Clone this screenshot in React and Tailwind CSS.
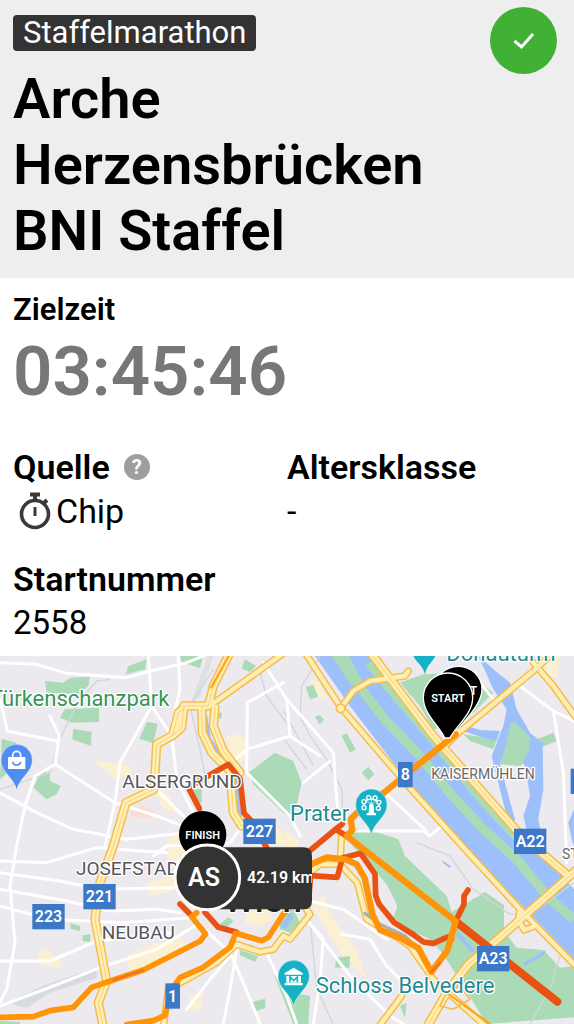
import React from "react";

const GREEN = "#abdbb6";
const WATER = "#9dc0fb";

const wideHighways = [
  "M690 -10L640 90L625 150L560 150L535 170L518 238L470 265L462 400L378 440L340 570L300 680L285 790L320 975L295 1040L310 1114",
  "M518 238L545 215L552 150",
  "M605 155L607 230L635 290L690 345L700 470L725 510",
  "M645 155L640 210L670 285L720 350",
  "M1112 -10L1300 240L1560 535L1700 655",
  "M1732 640L1510 835L1405 925L1340 1010L1280 1114",
];

const highways = [
  "M860 -15L650 135L625 150",
  "M915 -10L1023 155L1220 385L1400 585L1560 760L1732 935",
  "M1023 155L1060 105L1110 75L1215 60L1225 45",
  "M1732 -75L1600 45L1370 235L1340 265",
  "M1600 20L1660 90L1732 190",
  "M1025 535L1020 625L1072 680L1100 790L1170 830L1230 870L1300 970L1460 1114",
  "M1020 625L960 625L930 650L905 740L930 775L870 850L850 840L820 880L780 888L710 865L650 920L560 970L505 1000L490 1114",
  "M1205 1020L1135 1114",
  "M1560 760L1555 790L1572 822L1600 812",
];

const streets = [
  "M0 20L110 25L200 52L380 65L450 45L560 20L610 0",
  "M445 0L455 150L515 240L530 370L580 470",
  "M535 0L540 100L515 210",
  "M455 150L360 320L345 440L315 570",
  "M150 180L178 240L165 325L105 360L75 450L50 570L30 690L45 860L20 1000L0 1040",
  "M0 130L22 225L170 255",
  "M165 325L345 440L470 480L600 530",
  "M0 410L110 470L220 520L380 550L560 530",
  "M0 615L140 620L290 575L500 590",
  "M0 650L180 675L300 700L520 695",
  "M0 700L200 735L330 765L470 760L540 770",
  "M0 750L150 790L370 800L570 785",
  "M0 915L150 915L290 855L520 830",
  "M690 325L740 280L870 240L960 300",
  "M742 140L740 350L870 480L900 540",
  "M790 20L860 130L870 240",
  "M742 140L850 80",
  "M0 1050L160 990L300 935L470 880L600 800",
  "M852 120L1000 290L1010 430L1020 520",
  "M910 380L990 315",
  "M1050 525L1270 525L1290 540L1325 510",
  "M1155 410L1280 525",
  "M1560 90L1660 165L1722 195",
  "M1660 165L1690 350L1700 620",
  "M1440 80L1480 130",
  "M930 735L1030 760L1160 850",
  "M920 790L970 850L960 980L940 1104",
  "M920 790L1050 960L1170 1080L1210 1104",
  "M1025 835L1110 850L1160 930L1240 1010",
  "M620 825L690 890L730 980L780 1104",
  "M710 880L690 1000L670 1104",
  "M800 890L860 1020L890 1104",
  "M690 900L630 970L560 1060",
  "M460 600L500 570L690 560L740 490",
  "M470 400L560 490",
  "M1350 990L1430 1100",
];

const rails = [
  "M330 70L290 75L230 145L180 250L150 350L0 400",
  "M640 40L570 150L600 280L620 380",
  "M780 50L800 120L870 215",
  "M960 0L905 90L900 180L930 240L980 310L1025 400L1030 500",
  "M852 165L940 330M852 250L920 340",
  "M1250 560L1350 600L1420 700L1530 775L1600 770L1722 680",
  "M1680 900L1650 1000L1590 1104",
  "M930 790L950 1000L1000 1104",
];

const parks = [
  "M135 75L190 80L210 65L270 62L265 90L235 115L140 110Z",
  "M195 160L297 155L297 198L215 200L180 185Z",
  "M220 218L275 228L273 270L217 250Z",
  "M440 198L473 203L460 262L418 248Z",
  "M378 55L385 30L440 10L435 40Z",
  "M540 0L610 0L600 37L545 18Z",
  "M735 10L768 30L750 48L725 38Z",
  "M5 248L48 260L45 330L0 370Z",
  "M125 345L150 352L150 375L182 390L170 415L140 430L100 395Z",
  "M640 165L668 172L662 188L640 185Z",
  "M745 350L825 290L880 315L905 380L880 490L850 470L760 385Z",
  "M570 400L605 400L605 440L590 440Z",
  "M917 92L940 87L955 122L930 130Z",
  "M945 183L960 177L972 192L958 205Z",
  "M1025 240L1040 232L1067 280L1050 290Z",
  "M1085 350L1105 332L1123 355L1105 373Z",
  "M1200 80L1270 55L1400 50L1480 110L1440 150L1390 200L1300 220L1260 150Z",
  "M1390 235L1490 250L1480 280L1410 255Z",
  "M1610 250L1660 230L1670 255L1620 275Z",
  "M210 802L240 810L240 825L212 818Z",
  "M248 838L272 835L270 858L248 855Z",
  "M665 800L685 783L700 795L680 815L655 808Z",
  "M720 883L775 900L765 918L720 898Z",
  "M757 1038L795 1028L797 1055L760 1068Z",
  "M835 790L880 760L900 800L870 830L840 820Z",
  "M822 955L880 1010L930 1020L925 1104L880 1104Z",
  "M1008 905L1050 900L1048 935L1005 935Z",
  "M1200 1050L1220 1040L1215 1085Z",
  "M1415 730L1430 725L1436 740L1425 752L1415 745Z",
  "M0 1095L60 1098L60 1104L0 1104Z",
  "M1050 515L1130 528L1195 550L1215 600L1340 720L1355 768L1400 742L1455 708L1512 748L1512 825L1550 875L1630 882L1680 935L1722 930L1722 1084L1460 1104L1390 990L1330 895L1290 850L1230 822L1180 785L1192 750L1160 685L1080 595L1030 540Z",
];

const blocks = [
  "M680 240L715 235L745 260L742 300L720 320L690 290Z",
  "M278 312L330 320L390 330L395 350L345 370L320 345Z",
  "M460 400L500 405L530 470L490 460Z",
  "M115 890L145 875L150 895L185 910L175 940L150 930L120 930Z",
  "M380 900L440 870L540 845L560 870L480 930L390 950Z",
  "M740 760L790 750L820 790L780 810L735 800Z",
  "M930 740L970 720L1000 790L1070 880L1100 970L1020 890Z",
  "M570 1020L610 1010L600 1060L560 1060Z",
  "M1610 0L1680 0L1670 70L1620 40Z",
  "M500 550L560 530L560 620L510 640Z",
  "M440 680L520 660L530 700L450 720Z",
  "M930 70L960 80L980 130L950 120Z",
  "M750 480L830 500L860 570L780 560Z",
  "M852 520L900 560L852 600Z",
];

function Shield({ x, y, w = 97, h = 76, label }) {
  return (
    <g>
      <rect x={x} y={y} width={w} height={h} fill="#3b78c8" />
      <text x={x + w / 2} y={y + h / 2 + 17} fontSize="48" fontWeight="600" fill="#fff" textAnchor="middle">
        {label}
      </text>
    </g>
  );
}

function Label({ x, y, size = 66, color = "#55555b", anchor = "start", children }) {
  return (
    <text x={x} y={y} fontSize={size} fill={color} textAnchor={anchor} stroke="#fff" strokeWidth="8" strokeLinejoin="round" paintOrder="stroke">
      {children}
    </text>
  );
}

function PlacePin({ x, y, color, children }) {
  return (
    <g transform={`translate(${x} ${y})`}>
      <path d="M0 90C-8 52 -47 38 -47 0A47 47 0 0 1 47 0C47 38 8 52 0 90Z" fill={color} stroke="#fff" strokeOpacity=".6" strokeWidth="2" />
      {children}
    </g>
  );
}

function RaceMap() {
  return (
    <svg viewBox="0 0 1722 1104" className="block h-auto w-full bg-[#ece9ef] font-[Roboto,sans-serif]" role="img" aria-label="Wien">
      <g>
        {blocks.map((d) => <path key={d} d={d} fill="#fcf0d2" />)}
        <path d="M390 470L420 445L465 465L455 488L395 482Z" fill="#fbdcd6" />
        <path d="M20 1040L140 985L290 935L290 965L150 1010L80 1055Z" fill="#d5dbdf" />
        <path d="M640 0L600 120L570 150L590 90L625 0Z" fill="#dbe0e4" />
        {parks.map((d) => <path key={d} d={d} fill={GREEN} />)}
      </g>

      <g fill={WATER}>
        <path d="M945 0L1050 150L1222 375L1400 580L1552 735L1722 910L1722 700L1640 610L1540 520L1290 235L1105 0Z" />
        <path d="M1435 0L1480 40L1530 80L1550 160L1590 230L1628 260L1630 400L1615 490L1640 610L1590 560L1570 480L1590 420L1575 330L1550 300L1500 325L1520 400L1545 490L1530 520L1500 400L1475 300L1510 210L1520 160L1480 100Z" />
        <path d="M1385 205L1440 222L1500 225L1490 255L1450 245L1390 225Z" />
        <path d="M1722 460L1705 500L1715 550L1722 570Z" />
        <path d="M1325 612L1352 630L1350 637L1330 622Z" />
        <path d="M1370 820L1425 885L1415 890L1370 840Z" />
        <path d="M1570 920L1640 882L1630 898L1575 930Z" />
        <path d="M840 810L870 770L880 785L855 820Z" />
      </g>
      <g fill="none" stroke={GREEN} strokeLinejoin="round">
        <path d="M1025 -10L1085 100L1150 185L1260 300L1340 400L1450 520L1550 610L1650 730L1722 790" strokeWidth="28" />
        <path d="M1110 20L1200 130L1290 235L1440 420L1570 560" strokeWidth="34" />
        <path d="M1010 -10L1070 80" strokeWidth="36" />
      </g>
      <path d="M1545 197L1590 245L1588 280L1562 330L1500 325L1520 260L1532 200Z" fill={GREEN} />
      <path d="M613 180L625 250L660 300L705 375L717 490" fill="none" stroke={WATER} strokeWidth="17" />

      <g fill="none" stroke="#cfd7dc" strokeWidth="4">
        {rails.map((d) => <path key={d} d={d} />)}
      </g>
      <g fill="none" stroke="#fff" strokeWidth="9" strokeLinejoin="round" strokeLinecap="round">
        {streets.map((d) => <path key={d} d={d} />)}
      </g>
      <g fill="none" strokeLinejoin="round" strokeLinecap="round">
        <g stroke="#f6bd4c">
          {highways.map((d) => <path key={d} d={d} strokeWidth="22" />)}
          {wideHighways.map((d) => <path key={d} d={d} strokeWidth="28" />)}
        </g>
        <g stroke="#fdeeb4">
          {highways.map((d) => <path key={d} d={d} strokeWidth="13" />)}
          {wideHighways.map((d) => <path key={d} d={d} strokeWidth="19" />)}
        </g>
        <g stroke="#f8d279" strokeWidth="3">
          {wideHighways.map((d) => <path key={d} d={d} />)}
        </g>
        <path d="M686 0L634 94M1340 1010L1470 1104" stroke="#ffa51f" strokeWidth="7" />
        <circle cx="1022" cy="157" r="13" stroke="#f6bd4c" strokeWidth="5" fill="#fdeeb4" />
        <path d="M1340 1010L1380 990L1410 1030L1360 1060L1320 1050Z" stroke="#f6bd4c" strokeWidth="5" />
        <path d="M1095 772L1140 805L1215 840L1260 885" stroke="#a8afb2" strokeWidth="10" />
      </g>

      <g fill="none" strokeLinejoin="round" strokeLinecap="round" strokeWidth="17">
        <path d="M1367 796L1672 1037" stroke="#e95212" strokeWidth="24" />
        <path d="M598 458L568 400L582 384L685 325L720 368L732 472L752 492L800 575" stroke="#e95212" />
        <path d="M1027 504L1007 520L932 582L880 630M1007 520L1040 540" stroke="#e95212" />
        <path d="M932 659L1012 664L1027 606L1082 592L1125 654L1127 719L1137 744L1182 799L1242 837L1270 858L1300 862L1342 843L1355 848" stroke="#e95212" />
        <path d="M1367 796L1372 785L1392 745L1392 720L1404 702" stroke="#e95212" />
        <path d="M932 659L925 740M540 744L575 779M615 769L655 814L710 829" stroke="#e95212" />
        <path d="M1367 235L1152 410L1077 465L1052 490L1057 522L1040 540L1367 796L1342 884L1294 948L1255 876L1205 848L1140 822L1117 774L1094 666L1070 625L1037 610L980 604L932 625" stroke="#ff9409" strokeWidth="19" />
        <path d="M0 1084L100 1082L150 1064L220 1054L275 994L340 972L430 942L600 856L617 834L575 782L590 770" stroke="#ff9409" />
        <path d="M380 1106L460 1094L495 1078L515 1000L540 965L610 934L690 874L707 832L785 854L805 844L850 774L900 720" stroke="#ff9409" />
        <path d="M340 972L430 942M1294 948L1320 920" stroke="#ed7020" strokeWidth="6" />
      </g>

      <Label x={508} y={150} color="#3b9457" anchor="end">Türkenschanzpark</Label>
      <Label x={367} y={395} size={57}>ALSERGRUND</Label>
      <Label x={228} y={658} size={57}>JOSEFSTADT</Label>
      <Label x={305} y={849} size={57}>NEUBAU</Label>
      <Label x={1294} y={370} size={42} color="#68696f">KAISERMÜHLEN</Label>
      <Label x={1686} y={609} size={42} color="#68696f">STADLAU</Label>
      <Label x={870} y={496} color="#1f8b93">Prater</Label>
      <Label x={947} y={1011} color="#1f8b93">Schloss Belvedere</Label>
      <Label x={1339} y={15} color="#1f8b93">Donauturm</Label>
      <text x="672" y="768" fontSize="105" fontWeight="500" fill="#202020" stroke="#fff" strokeWidth="6" paintOrder="stroke">Wien</text>

      <Shield x={730} y={488} label="227" />
      <Shield x={250} y={684} label="221" />
      <Shield x={97} y={744} label="223" />
      <Shield x={496} y={982} w={44} label="1" />
      <Shield x={1194} y={318} w={44} label="8" />
      <Shield x={1542} y={518} label="A22" />
      <Shield x={1431} y={870} label="A23" />
      <rect x="1712" y="338" width="10" height="76" fill="#3b78c8" />

      <PlacePin x={50} y={312} color="#4f8df5">
        <path d="M-26 -9H26V27H-26Z" fill="#fff" />
        <path d="M-12 -9V-14A12 12 0 0 1 12 -14V-9" fill="none" stroke="#fff" strokeWidth="5" />
        <path d="M-12 5A12 10 0 0 0 12 5" fill="none" stroke="#4f8df5" strokeWidth="5" />
      </PlacePin>
      <PlacePin x={1114} y={446} color="#16b1c4">
        <g fill="none" stroke="#fff" strokeWidth="4">
          <path d="M-16 17A23 20 0 1 1 16 17" />
          <path d="M0 -2L-18 -12M0 -2L18 -12M0 -2V-18" strokeWidth="2" />
          <g fill="#16b1c4">
            <circle cx="-8" cy="-21" r="6" />
            <circle cx="11" cy="-20" r="6" />
            <circle cx="23" cy="-7" r="6" />
            <circle cx="21" cy="11" r="6" />
            <circle cx="-22" cy="-9" r="6" />
            <circle cx="-22" cy="9" r="6" />
          </g>
        </g>
        <path d="M-7 4A7 7 0 0 1 7 4L8 25H14V32H-14V25H-8Z" fill="#fff" />
      </PlacePin>
      <PlacePin x={881} y={960} color="#16b1c4">
        <path d="M0 -25L27 -9V-4H-27V-9ZM-22 0H22V20H-22ZM-27 21H27V28H-27Z" fill="#fff" />
        <path d="M-11 19V3L0 14L11 3V19" fill="none" stroke="#16b1c4" strokeWidth="5" />
      </PlacePin>
      <path d="M1240 0H1306C1298 18 1281 26 1275 55C1267 26 1248 18 1240 0Z" fill="#16b1c4" />

      <g stroke="#fff" strokeWidth="4" strokeLinejoin="round">
        <path d="M1372 222C1350 190 1304 150 1304 100A71 69 0 0 1 1446 100C1446 144 1396 190 1372 222Z" />
        <text x="1420" y="117" fontSize="36" fontWeight="600" fill="#fff" stroke="none" textAnchor="middle">T</text>
        <path d="M1334 246C1322 214 1270 176 1270 125A74 74 0 0 1 1418 125C1418 176 1364 214 1350 246Z" />
      </g>
      <text x="1344" y="138" fontSize="33" fontWeight="600" fill="#fff" textAnchor="middle">START</text>

      <circle cx="608" cy="536" r="71" />
      <text x="608" y="549" fontSize="33" fontWeight="600" fill="#fff" textAnchor="middle">FINISH</text>
      <path d="M620 574H910Q936 574 936 600V734Q936 760 910 760H620Z" fill="#333" />
      <clipPath id="distance-box"><path d="M620 574H936V760H620Z" /></clipPath>
      <text x="741" y="681" fontSize="48" fontWeight="600" fill="#fff" clipPath="url(#distance-box)">42.19 km</text>
      <circle cx="622" cy="664" r="97" fill="#333" stroke="#fff" strokeWidth="9" />
      <text x="612" y="689" fontSize="75" fontWeight="600" fill="#fff" textAnchor="middle">AS</text>
    </svg>
  );
}

function Stopwatch() {
  return (
    <svg viewBox="0 0 32 38" className="h-[38px] w-8" fill="none" stroke="#3a3a3a" aria-hidden="true">
      <circle cx="16" cy="22" r="13.5" strokeWidth="3.6" />
      <path d="M11 2.5H21M16 3V9M25 11L28 8" strokeWidth="4" />
      <path d="M16 15V24" strokeWidth="3" />
    </svg>
  );
}

export default function App() {
  return (
    <main className="bg-white font-[Roboto,sans-serif] text-black">
      <header className="flex items-start justify-between bg-[#eeeeee] pr-[17px] pb-[14px] pl-[13px]">
        <div className="flex flex-col items-start pt-[15px]">
          <span className="rounded-[4px] bg-[#333333] px-[10px] text-[31px] leading-[36px] text-white">Staffelmarathon</span>
          <h1 className="mt-[15px] text-[56px] leading-[66px] font-semibold">Arche Herzensbrücken BNI Staffel</h1>
        </div>
        <button type="button" aria-label="Bestätigt" className="mt-[7px] flex size-[67px] shrink-0 items-center justify-center rounded-full bg-[#40b135]">
          <svg viewBox="0 0 22 18" className="h-[18px] w-[22px]" fill="none" stroke="#fff" strokeWidth="3" aria-hidden="true">
            <path d="M1.500 9L8.500 15L20 2" />
          </svg>
        </button>
      </header>

      <dl className="grid grid-cols-2 px-[13px] pt-[12px] pb-[12px]">
        <div className="col-span-2">
          <dt className="text-[31px] leading-[40px] font-semibold">Zielzeit</dt>
          <dd className="text-[69px] leading-[84px] font-semibold text-[#777777]">03:45:46</dd>
        </div>
        <div className="mt-[32px]">
          <dt className="flex items-center gap-[14px] text-[34px] leading-[42px] font-semibold">
            Quelle
            <button type="button" aria-label="Hilfe zu Quelle" className="flex size-[26px] items-center justify-center rounded-full bg-[#9e9e9e] text-[20px] leading-[26px] font-bold text-white">?</button>
          </dt>
          <dd className="flex items-center gap-[5px] pt-[2px] pl-[6px] text-[34px] leading-[42px]">
            <Stopwatch />
            Chip
          </dd>
        </div>
        <div className="mt-[32px]">
          <dt className="text-[34px] leading-[42px] font-semibold">Altersklasse</dt>
          <dd className="pt-[2px] text-[34px] leading-[42px]">-</dd>
        </div>
        <div className="col-span-2 mt-[26px]">
          <dt className="text-[34px] leading-[42px] font-semibold">Startnummer</dt>
          <dd className="pt-[2px] text-[33px] leading-[42px]">2558</dd>
        </div>
      </dl>

      <RaceMap />
    </main>
  );
}
